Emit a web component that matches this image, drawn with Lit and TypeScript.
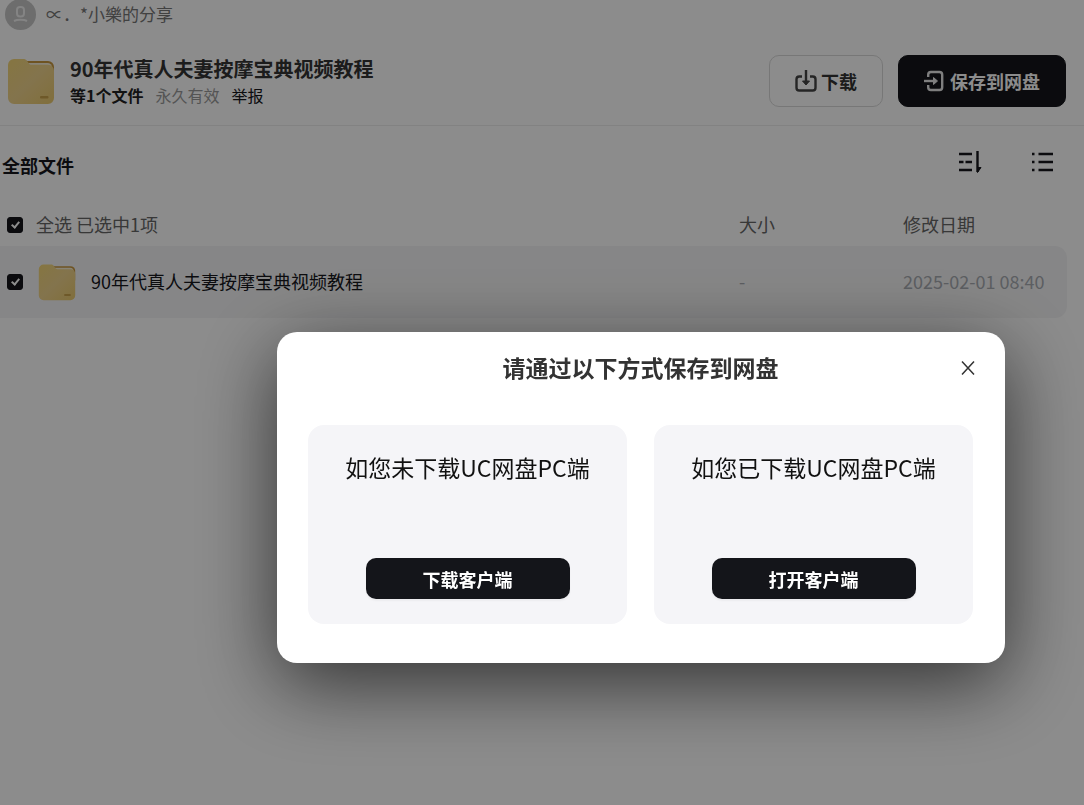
import { LitElement, html, svg, css } from "lit";
import { customElement, property, state } from "lit/decorators.js";

interface ShareFile {
  name: string;
  size: string;
  modified: string;
  checked: boolean;
}

@customElement("folder-icon")
export class FolderIcon extends LitElement {
  static styles = css`
    :host {
      display: block;
      flex: none;
      width: 48px;
      height: 48px;
    }
    :host([small]) {
      width: 38px;
      height: 38px;
    }
    .art {
      display: block;
      width: 100%;
      height: 100%;
    }
  `;

  render() {
    return html`<svg class="art" viewBox="0 -1 48 48" aria-hidden="true">
      <defs>
        <linearGradient id="front" x1="0" y1="0" x2="1" y2="1">
          <stop offset="0" stop-color="#f3d678" />
          <stop offset="0.5" stop-color="#efd38c" />
          <stop offset="1" stop-color="#ebca6e" />
        </linearGradient>
      </defs>
      <path d="M18 3h23a6 6 0 0 1 6 6v12H14z" fill="#c8983f" />
      <path d="M20 5h20.500a4.500 4.500 0 0 1 4.500 4.500V20H16z" fill="#f7efd8" />
      <path
        d="M1 7a6 6 0 0 1 6-6h9c2 0 3 .5 4 1.800l1.500 2.200c.8 1.200 1.500 1.800 3 1.800H41a6 6 0 0 1 6 6V40a6 6 0 0 1-6 6H7a6 6 0 0 1-6-6z"
        fill="url(#front)"
      />
      <rect x="33" y="38" width="8.500" height="2.600" rx="1" fill="#c9a24c" />
    </svg>`;
  }
}

@customElement("client-dialog")
export class ClientDialog extends LitElement {
  @property({ type: Array }) options: { text: string; action: string }[] = [];

  static styles = css`
    :host {
      position: fixed;
      inset: 0;
      display: flex;
      justify-content: center;
      align-items: flex-start;
      padding: 332px 0 0 198px;
      box-sizing: border-box;
      background: rgba(0, 0, 0, 0.45);
    }
    .dialog {
      position: relative;
      box-sizing: border-box;
      width: 728px;
      max-width: 100%;
      padding: 18px 32px 39px 31px;
      border-radius: 20px;
      background: #fff;
      box-shadow: 0 20px 80px rgba(0, 0, 0, 0.65);
    }
    .title {
      margin: 0 0 41px;
      font-size: 23px;
      line-height: 34px;
      font-weight: 700;
      text-align: center;
      color: #333;
    }
    .close {
      position: absolute;
      top: 24px;
      right: 25px;
      display: grid;
      place-items: center;
      width: 24px;
      height: 24px;
      padding: 0;
      border: 0;
      background: none;
      cursor: pointer;
    }
    .cards {
      display: grid;
      grid-template-columns: 1fr 1fr;
      gap: 27px;
    }
    .card {
      display: flex;
      flex-direction: column;
      align-items: center;
      padding: 25px 16px;
      border-radius: 16px;
      background: #f5f5f8;
    }
    .text {
      margin: 0 0 74px;
      font-size: 23px;
      line-height: 34px;
      color: #111;
    }
    .action {
      width: 204px;
      height: 41px;
      padding: 0;
      border: 0;
      border-radius: 10px;
      background: #14151a;
      box-shadow: 0 2px 2px rgba(0, 0, 0, 0.04);
      color: #fff;
      font: inherit;
      font-size: 18px;
      font-weight: 700;
      cursor: pointer;
    }
  `;

  render() {
    return html`<section class="dialog" role="dialog" aria-modal="true" aria-labelledby="title">
      <h2 class="title" id="title">请通过以下方式保存到网盘</h2>
      <button class="close" type="button" aria-label="关闭">
        <svg width="14" height="14" viewBox="0 0 14 14" aria-hidden="true">
          <path d="M1 .5 13 13.500M13 .5 1 13.500" stroke="#333" stroke-width="1.500" fill="none" />
        </svg>
      </button>
      <div class="cards">
        ${this.options.map(
          (o) => html`<div class="card">
            <p class="text">${o.text}</p>
            <button class="action" type="button">${o.action}</button>
          </div>`
        )}
      </div>
    </section>`;
  }
}

@customElement("app-root")
export class AppRoot extends LitElement {
  @state() private files: ShareFile[] = [
    { name: "90年代真人夫妻按摩宝典视频教程", size: "-", modified: "2025-02-01 08:40", checked: true },
  ];

  private options = [
    { text: "如您未下载UC网盘PC端", action: "下载客户端" },
    { text: "如您已下载UC网盘PC端", action: "打开客户端" },
  ];

  static styles = css`
    :host {
      display: block;
      min-height: 100vh;
      background: #fff;
      color: #16171c;
      font-family: "Noto Sans CJK SC", sans-serif;
      font-size: 18px;
    }
    .sharer {
      display: flex;
      align-items: center;
      gap: 10px;
      height: 28px;
      padding-left: 5px;
      font-size: 17px;
      color: #777;
    }
    .avatar {
      flex: none;
      width: 31px;
      height: 31px;
    }
    .label {
      padding-bottom: 2px;
    }
    .header {
      display: flex;
      align-items: center;
      gap: 15px;
      padding: 27px 18px 18px 7px;
      border-bottom: 1px solid #ededed;
    }
    .info {
      flex: 1;
      min-width: 0;
    }
    .name {
      margin: 0;
      font-size: 20px;
      line-height: 28px;
      font-weight: 700;
      color: #333;
    }
    .meta {
      display: flex;
      gap: 12px;
      font-size: 16px;
      line-height: 24px;
    }
    .count {
      font-weight: 700;
      color: #222;
    }
    .valid {
      color: #999;
    }
    .report {
      color: #16171c;
      text-decoration: none;
    }
    .button {
      display: flex;
      align-items: center;
      justify-content: center;
      gap: 4px;
      box-sizing: border-box;
      height: 52px;
      padding: 0 25px;
      border: 1px solid #d9d9d9;
      border-radius: 10px;
      background: #fff;
      color: #333;
      font: inherit;
      font-weight: 700;
      cursor: pointer;
    }
    .save {
      border-color: #14151a;
      background: #14151a;
      color: #fff;
    }
    .toolbar {
      display: flex;
      align-items: center;
      justify-content: space-between;
      height: 78px;
      padding: 0 30px 0 2px;
    }
    .heading {
      margin: 0;
      font-size: 18px;
      line-height: 26px;
      font-weight: 700;
    }
    .tools {
      display: flex;
      gap: 48px;
      padding-bottom: 6px;
    }
    .tool {
      width: 24px;
      height: 24px;
      padding: 0;
      border: 0;
      background: none;
      cursor: pointer;
    }
    .list {
      padding-right: 17px;
    }
    .table {
      width: 100%;
      border-collapse: separate;
      border-spacing: 0;
      table-layout: fixed;
    }
    .th {
      height: 42px;
      padding: 0;
      text-align: left;
      font-weight: 400;
      color: #666;
    }
    .td {
      height: 72px;
      padding: 0;
      background: #f5f5f6;
    }
    .narrow {
      box-sizing: border-box;
      width: 164px;
      padding-bottom: 2px;
    }
    .td.narrow {
      color: #a8acb2;
    }
    .td.narrow:last-child {
      border-radius: 0 12px 12px 0;
    }
    .pick {
      display: flex;
      align-items: center;
      padding-left: 7px;
    }
    .all {
      gap: 13px;
    }
    .row {
      gap: 15px;
    }
    .box {
      appearance: none;
      display: grid;
      place-items: center;
      flex: none;
      width: 16px;
      height: 16px;
      margin: 0;
      border: 1px solid #14151a;
      border-radius: 3px;
      background: #fff;
    }
    .box:checked {
      background: #14151a;
    }
    .box:checked::before {
      content: "";
      width: 3px;
      height: 6px;
      margin-bottom: 2px;
      border: solid #fff;
      border-width: 0 2px 2px 0;
      transform: rotate(40deg);
    }
  `;

  private toggle(on: boolean, index?: number) {
    this.files = this.files.map((f, i) => (index === undefined || i === index ? { ...f, checked: on } : f));
  }

  private avatar() {
    return svg`<circle cx="15.500" cy="15.500" r="15.500" fill="#c6c6c6" />
      <rect x="12" y="8" width="7" height="9.500" rx="3" fill="none" stroke="#f0f0f0" stroke-width="2" />
      <path d="M9 22c3-1.600 10-1.600 13 0" fill="none" stroke="#f0f0f0" stroke-width="2" />`;
  }

  render() {
    const count = this.files.filter((f) => f.checked).length;
    const all = count === this.files.length;
    return html`
      <div class="sharer">
        <svg class="avatar" viewBox="0 0 31 31" aria-hidden="true">${this.avatar()}</svg>
        <span class="label">∝．*小樂的分享</span>
      </div>
      <header class="header">
        <folder-icon></folder-icon>
        <div class="info">
          <h1 class="name">90年代真人夫妻按摩宝典视频教程</h1>
          <div class="meta">
            <span class="count">等1个文件</span>
            <span class="valid">永久有效</span>
            <a class="report" href="#report">举报</a>
          </div>
        </div>
        <button class="button" type="button">
          <svg width="22" height="22" viewBox="0 0 22 22" fill="none" stroke="#444" stroke-width="2.400" aria-hidden="true">
            <path d="M7 6.500H4.200A2.700 2.700 0 0 0 1.500 9.200v8.600a2.700 2.700 0 0 0 2.700 2.700h13.600a2.700 2.700 0 0 0 2.700-2.700V9.200a2.700 2.700 0 0 0-2.700-2.700H15" />
            <path d="M11 0V13" />
            <path d="m7.500 11 3.500 4 3.500-4z" fill="#444" stroke-width="1" />
          </svg>
          下载
        </button>
        <button class="button save" type="button">
          <svg width="22" height="22" viewBox="0 0 22 22" fill="none" stroke="#e8e8e8" stroke-width="2.400" aria-hidden="true">
            <path d="M4.200 7V4.700A2.700 2.700 0 0 1 6.900 2h8.600a2.700 2.700 0 0 1 2.700 2.700v12.600a2.700 2.700 0 0 1-2.700 2.700H6.900a2.700 2.700 0 0 1-2.700-2.700V15" />
            <path d="M0 11H12" />
            <path d="m9.500 7.500 4 3.500-4 3.500z" fill="#e8e8e8" stroke-width="1" />
          </svg>
          保存到网盘
        </button>
      </header>
      <div class="toolbar">
        <h2 class="heading">全部文件</h2>
        <div class="tools">
          <button class="tool" type="button" aria-label="排序">
            <svg width="24" height="24" viewBox="0 0 24 24" fill="none" stroke="#16171c" stroke-width="2.400" aria-hidden="true">
              <path d="M1 4h13M1 12h4.500M7.500 12H14M1 20h13M19.500 1v21" />
              <path d="M19.500 22.500V17.500h3.500z" fill="#16171c" stroke-width="1" />
            </svg>
          </button>
          <button class="tool" type="button" aria-label="列表视图">
            <svg width="24" height="24" viewBox="0 0 24 24" fill="none" stroke="#16171c" stroke-width="2.400" aria-hidden="true">
              <path d="M2 4h2.500M8.500 4H23M2 12h2.500M8.500 12H23M2 20h2.500M8.500 20H23" />
            </svg>
          </button>
        </div>
      </div>
      <div class="list">
        <table class="table">
          <thead>
            <tr>
              <th class="th" scope="col">
                <label class="pick all">
                  <input
                    class="box"
                    type="checkbox"
                    .checked=${all}
                    @change=${(e: Event) => this.toggle((e.target as HTMLInputElement).checked)}
                  />
                  <span class="label">全选 已选中${count}项</span>
                </label>
              </th>
              <th class="th narrow" scope="col">大小</th>
              <th class="th narrow" scope="col">修改日期</th>
            </tr>
          </thead>
          <tbody>
            ${this.files.map(
              (f, i) => html`<tr>
                <td class="td">
                  <label class="pick row">
                    <input
                      class="box"
                      type="checkbox"
                      .checked=${f.checked}
                      @change=${(e: Event) => this.toggle((e.target as HTMLInputElement).checked, i)}
                    />
                    <folder-icon small></folder-icon>
                    <span class="label">${f.name}</span>
                  </label>
                </td>
                <td class="td narrow">${f.size}</td>
                <td class="td narrow">${f.modified}</td>
              </tr>`
            )}
          </tbody>
        </table>
      </div>
      <client-dialog .options=${this.options}></client-dialog>
    `;
  }
}
